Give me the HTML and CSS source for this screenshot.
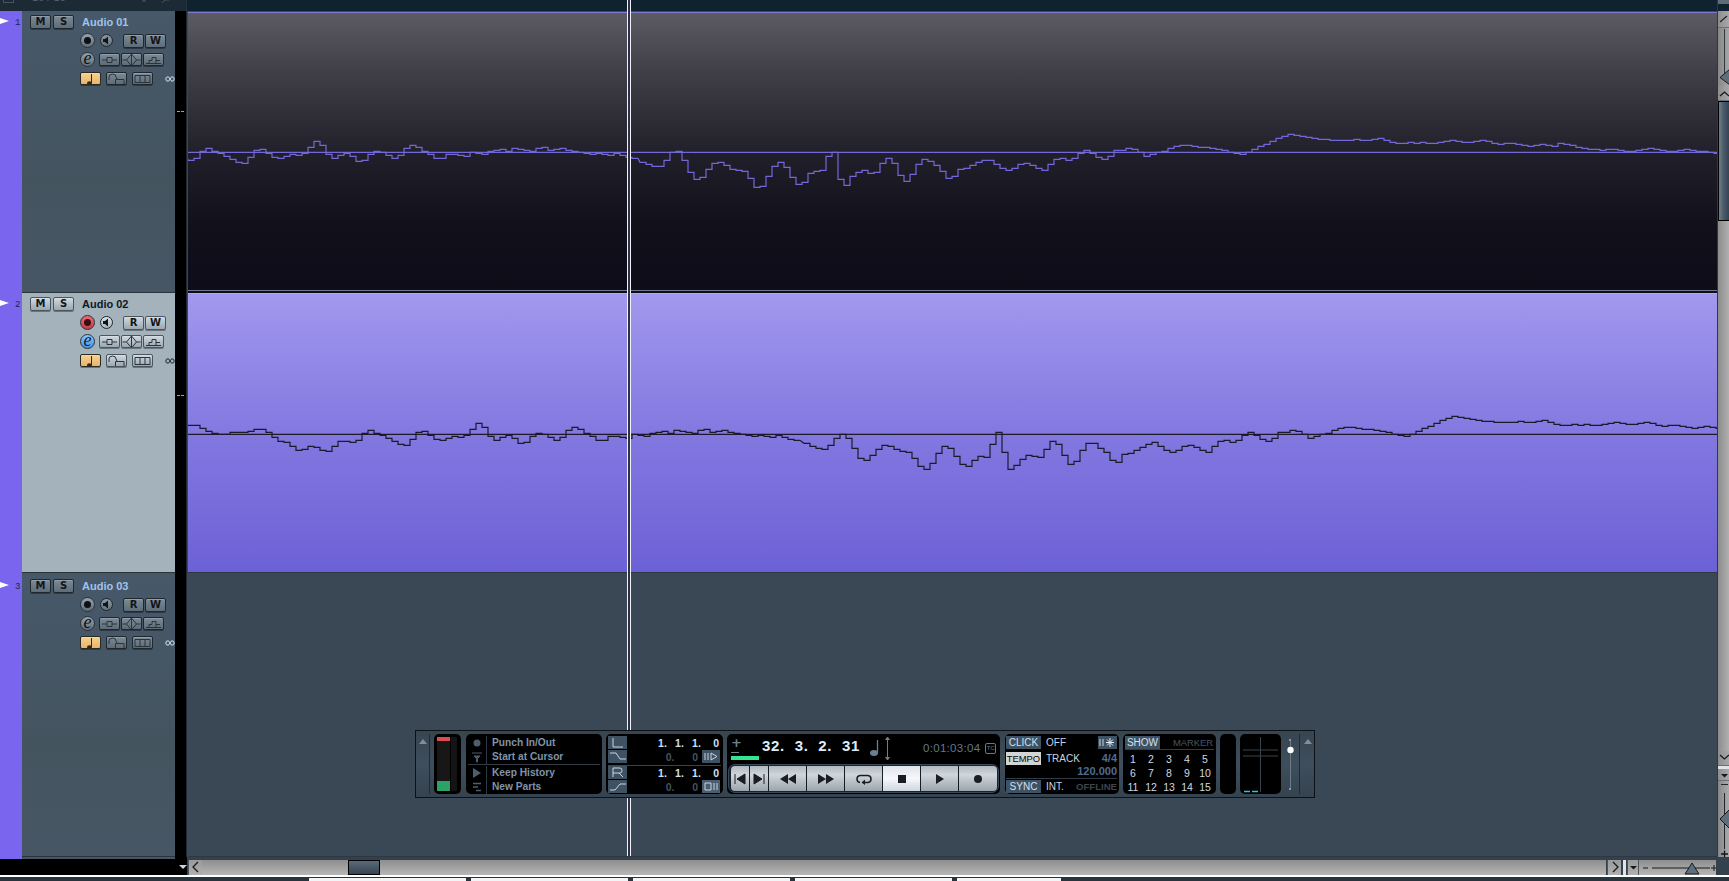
FILE: index.html
```html
<!DOCTYPE html>
<html lang="en">
<head>
<meta charset="utf-8">
<title>Audio tracks</title>
<link rel="stylesheet" href="styles.css">
</head>
<body>
<svg class="defs" aria-hidden="true">
  <symbol id="i-trim" viewBox="0 0 21 14"><path d="M3 7h5M13 7h5M8 4.500h5v5H8z" fill="none" stroke="currentColor"/></symbol>
  <symbol id="i-diamond" viewBox="0 0 21 14"><path d="M10.500 1l5 6-5 6-5-6zM1.500 7h4M15.500 7h4M10.500 1v12" fill="none" stroke="currentColor"/></symbol>
  <symbol id="i-eq" viewBox="0 0 21 14"><path d="M3 10.500h15M6 10.500V7.500h3V4.500h4v6M13 7.500h4" fill="none" stroke="currentColor"/></symbol>
  <symbol id="i-note" viewBox="0 0 21 14"><ellipse cx="9.500" cy="11" rx="2.500" ry="1.800" fill="currentColor"/><path d="M11.500 11V2" stroke="currentColor" fill="none"/></symbol>
  <symbol id="i-lock" viewBox="0 0 21 14"><path d="M3 8V5q0-3 3.500-3T10 5l1 2M9.500 7.500H18v5H9.500z" fill="none" stroke="currentColor"/></symbol>
  <symbol id="i-cells" viewBox="0 0 21 14"><path d="M3 3.500h15v7H3zM8 3.500v7M13 3.500v7" fill="none" stroke="currentColor"/></symbol>
  <symbol id="i-speaker" viewBox="0 0 13 13"><path d="M3 5h2l3-2.500v8L5 8H3z" fill="currentColor"/></symbol>
  <symbol id="i-inf" viewBox="0 0 10 6"><path d="M3 .8a2.200 2.200 0 1 0 0 4.400c2 0 2-4.400 4-4.400a2.200 2.200 0 1 1 0 4.400c-2 0-2-4.400-4-4.400z" fill="none" stroke="currentColor"/></symbol>
</svg>

<div class="app">
  <div class="main">
    <div class="arrange">
      <div class="topbar">
        <div class="topbar-left"><span class="top-box"></span><span class="top-count">16 / 16</span><svg class="top-tools" width="40" height="4"><path d="M3 0v2M1 1h4M21 3l3-3M24 0h4" stroke="#47535d" fill="none"/></svg></div>
        <div class="topbar-right"></div>
      </div>

      <section class="track">
        <div class="strip"><span class="play"></span><span class="num">1</span></div>
        <div class="inspector">
          <div class="row row1"><button class="btn">M</button><button class="btn btn-s">S</button><span class="name">Audio 01</span></div>
          <div class="row row2"><span class="circle rec"><i></i></span><span class="circle mon"><svg width="13" height="13"><use href="#i-speaker"/></svg></span><button class="btn btn-r">R</button><button class="btn btn-w">W</button></div>
          <div class="row row3"><span class="circle edit">e</span><button class="btn ic"><svg width="21" height="14"><use href="#i-trim"/></svg></button><button class="btn ic"><svg width="21" height="14"><use href="#i-diamond"/></svg></button><button class="btn ic"><svg width="21" height="14"><use href="#i-eq"/></svg></button></div>
          <div class="row row4"><button class="btn ic orange"><svg width="21" height="14"><use href="#i-note"/></svg></button><button class="btn ic lock"><svg width="21" height="14"><use href="#i-lock"/></svg></button><button class="btn ic lock"><svg width="21" height="14"><use href="#i-cells"/></svg></button><svg class="inf" width="10" height="6"><use href="#i-inf"/></svg></div>
        </div>
        <div class="vu"><span class="tick"></span></div>
        <div class="lane lane-dark"><svg class="wave" data-track="1"></svg></div>
      </section>

      <section class="track track-sel">
        <div class="strip"><span class="play"></span><span class="num">2</span></div>
        <div class="inspector">
          <div class="row row1"><button class="btn">M</button><button class="btn btn-s">S</button><span class="name">Audio 02</span></div>
          <div class="row row2"><span class="circle rec on"><i></i></span><span class="circle mon"><svg width="13" height="13"><use href="#i-speaker"/></svg></span><button class="btn btn-r">R</button><button class="btn btn-w">W</button></div>
          <div class="row row3"><span class="circle edit on">e</span><button class="btn ic"><svg width="21" height="14"><use href="#i-trim"/></svg></button><button class="btn ic"><svg width="21" height="14"><use href="#i-diamond"/></svg></button><button class="btn ic"><svg width="21" height="14"><use href="#i-eq"/></svg></button></div>
          <div class="row row4"><button class="btn ic orange"><svg width="21" height="14"><use href="#i-note"/></svg></button><button class="btn ic lock"><svg width="21" height="14"><use href="#i-lock"/></svg></button><button class="btn ic lock"><svg width="21" height="14"><use href="#i-cells"/></svg></button><svg class="inf" width="10" height="6"><use href="#i-inf"/></svg></div>
        </div>
        <div class="vu"><span class="tick"></span></div>
        <div class="lane lane-sel"><svg class="wave" data-track="2"></svg></div>
      </section>

      <section class="track track-last">
        <div class="strip"><span class="play"></span><span class="num">3</span></div>
        <div class="inspector">
          <div class="row row1"><button class="btn">M</button><button class="btn btn-s">S</button><span class="name">Audio 03</span></div>
          <div class="row row2"><span class="circle rec"><i></i></span><span class="circle mon"><svg width="13" height="13"><use href="#i-speaker"/></svg></span><button class="btn btn-r">R</button><button class="btn btn-w">W</button></div>
          <div class="row row3"><span class="circle edit">e</span><button class="btn ic"><svg width="21" height="14"><use href="#i-trim"/></svg></button><button class="btn ic"><svg width="21" height="14"><use href="#i-diamond"/></svg></button><button class="btn ic"><svg width="21" height="14"><use href="#i-eq"/></svg></button></div>
          <div class="row row4"><button class="btn ic orange"><svg width="21" height="14"><use href="#i-note"/></svg></button><button class="btn ic lock"><svg width="21" height="14"><use href="#i-lock"/></svg></button><button class="btn ic lock"><svg width="21" height="14"><use href="#i-cells"/></svg></button><svg class="inf" width="10" height="6"><use href="#i-inf"/></svg></div>
        </div>
        <div class="vu"></div>
        <div class="lane lane-empty"></div>
      </section>
    </div>

    <aside class="vscroll">
      <div class="vs-head"></div>
      <div class="vs-gap"></div>
      <div class="vs-btn"><svg width="12" height="15"><path d="M2 11L9 5" stroke="#20282e" stroke-width="1.300" fill="none"/></svg></div>
      <div class="vs-zoom vs-zoom-a"><svg width="12" height="58"><path d="M6.500 1V48" stroke="#30383e"/><path d="M12 41L2 49.500 12 57z" fill="#5e6e7c" stroke="#15191c"/></svg></div>
      <div class="vs-btn vs-arrow"><svg width="12" height="15"><path d="M2 10l4.500-4L11 10" stroke="#15191c" stroke-width="1.300" fill="none"/></svg></div>
      <div class="vs-thumb"></div>
      <div class="vs-track"></div>
      <div class="vs-btn vs-arrow"><svg width="12" height="14"><path d="M2 4l4.500 4L11 4" stroke="#15191c" stroke-width="1.300" fill="none"/></svg></div>
      <div class="vs-white"></div>
      <div class="vs-btn vs-drop"><svg width="12" height="12"><path d="M3 5h7l-3.500 3.500z" fill="#15191c"/></svg></div>
      <div class="vs-zoom vs-zoom-b"><svg width="12" height="76"><path d="M3 3.500h7M6.500 12V68" stroke="#20282e" fill="none"/><path d="M12 28L2 38 12 48z" fill="#5e6e7c" stroke="#15191c"/><path d="M3 73h7M6.500 69.500v7" stroke="#101418" stroke-width="1.300" fill="none"/></svg></div>
    </aside>
  </div>

  <div class="hbar">
    <div class="hb-left"><span class="hb-strip"></span><span class="hb-caret"></span></div>
    <div class="hb-scroll">
      <div class="hb-btn"><svg width="14" height="14"><path d="M9 2L4 7l5 5" stroke="#15191c" stroke-width="1.300" fill="none"/></svg></div>
      <div class="hb-lead"></div>
      <div class="hb-thumb"></div>
      <div class="hb-track"></div>
      <div class="hb-btn"><svg width="14" height="14"><path d="M5 2l5 5-5 5" stroke="#15191c" stroke-width="1.300" fill="none"/></svg></div>
      <div class="hb-white"></div>
      <div class="hb-btn hb-drop"><svg width="11" height="14"><path d="M2 6h7L5.500 9.500z" fill="#15191c"/></svg></div>
      <div class="hb-zoom"><svg width="78" height="15"><path d="M4 8h5M13 8h58M72 8h6M75 5v6" stroke="#15191c" fill="none"/><path d="M46 14l7-11 7 11z" fill="#5e6e7c" stroke="#15191c"/></svg></div>
      <div class="hb-end"></div>
    </div>
  </div>

  <div class="taskbar">
    <span class="task"></span><span class="task"></span><span class="task"></span><span class="task"></span><span class="task task-last"></span>
  </div>

  <div class="cursor"></div>

  <div class="transport">
    <div class="tp-edge"><span class="tri"></span></div>

    <div class="panel tp-meter"><div class="mbar"><span class="m-red"></span><span class="m-green"></span></div><div class="mbar2"></div></div>

    <div class="panel tp-modes">
      <div class="mode-group">
        <div class="mode"><span class="mode-ic"><svg width="14" height="12"><circle cx="7" cy="6" r="3.500" fill="#4e5e6c"/></svg></span><span class="mode-t">Punch In/Out</span></div>
        <div class="mode"><span class="mode-ic"><svg width="14" height="12"><path d="M2 2h10M4 5h6L7.500 7.500V11h-1V7.500z" stroke="#4e5e6c" fill="#4e5e6c"/></svg></span><span class="mode-t">Start at Cursor</span></div>
      </div>
      <div class="mode-group mode-group-b">
        <div class="mode"><span class="mode-ic"><svg width="14" height="12"><path d="M3 1l8 5-8 5z" fill="#4e5e6c"/></svg></span><span class="mode-t">Keep History</span></div>
        <div class="mode"><span class="mode-ic"><svg width="14" height="12"><path d="M3 2.500h8M3 6h5M6 9.500h5" stroke="#4e5e6c" stroke-width="1.500"/></svg></span><span class="mode-t">New Parts</span></div>
      </div>
    </div>

    <div class="panel tp-loc">
      <div class="loc-row"><span class="loc-ic"><svg width="19" height="13"><path d="M5 2v9h10" stroke="#c8d4e0" fill="none"/></svg></span><span class="loc-v">1. &nbsp;1. &nbsp;1. &nbsp; 0</span></div>
      <div class="loc-row"><span class="loc-ic"><svg width="19" height="13"><path d="M2 3h6l4 6h6" stroke="#c8d4e0" fill="none"/></svg></span><span class="loc-v loc-dim">0. &nbsp; 0</span><span class="loc-btn"><svg width="18" height="13"><path d="M3 3v7M6 3v7M9 3l6 3.500L9 10z" stroke="#c8d4e0" fill="none"/></svg></span></div>
      <div class="loc-row loc-sep"><span class="loc-ic"><svg width="19" height="13"><path d="M5 11V2h7q2 0 2 2.500T12 7H5M11 7l4 4" stroke="#c8d4e0" fill="none"/></svg></span><span class="loc-v">1. &nbsp;1. &nbsp;1. &nbsp; 0</span></div>
      <div class="loc-row"><span class="loc-ic"><svg width="19" height="13"><path d="M2 10h5l5-6h6" stroke="#c8d4e0" fill="none"/></svg></span><span class="loc-v loc-dim">0. &nbsp; 0</span><span class="loc-btn loc-btn-b"><svg width="18" height="13"><path d="M3 3h6v7H3zM12 3v7M15 3v7" stroke="#c8d4e0" fill="none"/></svg></span></div>
    </div>

    <div class="panel tp-main">
      <div class="display">
        <div class="nudge"><span class="nudge-p">+</span><span class="nudge-m"></span><span class="lvl"></span></div>
        <span class="pos">32. &nbsp;3. &nbsp;2. &nbsp;31</span>
        <svg class="note" width="30" height="26"><ellipse cx="9" cy="18" rx="4" ry="3" fill="#6c7f90"/><path d="M12.500 18V5" stroke="#6c7f90" stroke-width="1.300"/><path d="M22.500 3v21" stroke="#6c7f90"/><path d="M20.500 5l2-3 2 3M20.500 22l2 3 2-3" stroke="#6c7f90" fill="#6c7f90"/></svg>
        <span class="time">0:01:03:04</span><span class="tc">TC</span>
      </div>
      <div class="deck">
        <div class="tbtn t-s"><svg width="14" height="12"><path d="M2 1v10M12 1L4 6l8 5z" fill="#1a1d21" stroke="#1a1d21"/></svg></div>
        <div class="tbtn t-s"><svg width="14" height="12"><path d="M12 1v10M2 1l8 5-8 5z" fill="#1a1d21" stroke="#1a1d21"/></svg></div>
        <div class="tbtn"><svg width="18" height="12"><path d="M9 1L1 6l8 5zM17 1L9 6l8 5z" fill="#1a1d21"/></svg></div>
        <div class="tbtn"><svg width="18" height="12"><path d="M1 1l8 5-8 5zM9 1l8 5-8 5z" fill="#1a1d21"/></svg></div>
        <div class="tbtn"><svg width="18" height="12"><path d="M5 9.500C1 9 1 3 5 2.500h8c4 .5 4 6.500 0 7H9" fill="none" stroke="#1a1d21" stroke-width="1.500"/><path d="M10 6.500L6.500 9.500 10 12z" fill="#1a1d21"/></svg></div>
        <div class="tbtn t-on"><svg width="10" height="10"><path d="M1 1h8v8H1z" fill="#1a1d21"/></svg></div>
        <div class="tbtn"><svg width="10" height="12"><path d="M1 1l8 5-8 5z" fill="#1a1d21"/></svg></div>
        <div class="tbtn"><svg width="10" height="10"><circle cx="5" cy="5" r="4" fill="#1a1d21"/></svg></div>
      </div>
    </div>

    <div class="panel tp-sync">
      <div class="sy-row"><span class="lab">CLICK</span><span class="sy-t">OFF</span><span class="sy-btn"><svg width="19" height="13"><path d="M2 3v7M5 3v7" stroke="#c8d4e0"/><path d="M12 2v9M8 6.500h8M9 3.500l6 6M15 3.500l-6 6" stroke="#e4ecf4"/></svg></span></div>
      <div class="sy-row sy-tempo"><span class="lab lab-on">TEMPO</span><span class="sy-t">TRACK</span><b class="sy-r sy-blue">4/4</b></div>
      <div class="sy-row sy-bpm"><b class="sy-r sy-blue">120.000</b></div>
      <div class="sy-row sy-last"><span class="lab">SYNC</span><span class="sy-t">INT.</span><b class="sy-r sy-dim">OFFLINE</b></div>
    </div>

    <div class="panel tp-show">
      <div class="sh-head"><span class="lab lab-show">SHOW</span><span class="sh-m">MARKER</span></div>
      <div class="sh-grid">
        <span>1</span><span>2</span><span>3</span><span>4</span><span>5</span>
        <span>6</span><span>7</span><span>8</span><span>9</span><span>10</span>
        <span>11</span><span>12</span><span>13</span><span>14</span><span>15</span>
      </div>
    </div>

    <div class="panel tp-blank"></div>

    <div class="panel tp-out"><svg width="41" height="61"><path d="M20.500 3v55M3 16h17M21 16h17M3 22h17M21 22h17" stroke="#3a444e" fill="none"/><path d="M4 57.500h6M12 57.500h6" stroke="#1fc8f0" stroke-width="1.500"/></svg></div>

    <div class="tp-slider"><svg width="16" height="61"><path d="M7.500 6v49" stroke="#6a7a88"/><path d="M0 6h2v2H0zM0 55h2v2H0z" fill="#8898a6" transform="translate(6 -1)"/><circle cx="7.500" cy="16" r="3.200" fill="#fff"/></svg></div>
    <div class="tp-edge tp-edge-r"><span class="tri"></span></div>
  </div>
</div>
<script src="wave.js"></script>
</body>
</html>
```

FILE: styles.css
```css
* { box-sizing: border-box; }
html, body { margin: 0; height: 100%; overflow: hidden; background: #3a4856; }
body { font-family: "Liberation Sans", Arial, sans-serif; }
.defs { display: none; }
button { font: inherit; padding: 0; margin: 0; }

.app { position: relative; width: 1729px; height: 881px; display: flex; flex-direction: column; overflow: hidden; }
.main { display: flex; height: 857px; }
.arrange { width: 1717px; display: flex; flex-direction: column; }

.topbar { display: flex; height: 11px; overflow: hidden; }
.topbar-left { width: 187px; background: #1b2a35; position: relative; border-right: 1px solid #26323c; }
.topbar-right { flex: 1; background: #0e2230; }
.top-box { display: block; position: absolute; left: 3px; top: -8px; width: 11px; height: 11px; border: 1px solid #47535d; }
.top-count { display: block; position: absolute; left: 32px; top: -9px; font-size: 11px; line-height: 13px; color: #55626e; }
.top-tools { display: block; position: absolute; left: 141px; top: 0; }

.track { display: flex; height: 282px; }
.strip { width: 22px; background: #7a66ee; display: flex; align-items: flex-start; padding-top: 7px; position: relative; }
.play { width: 0; height: 0; border-left: 9px solid #fff; border-top: 3.500px solid transparent; border-bottom: 3.500px solid transparent; margin-top: 0; }
.num { margin-left: 6px; font: 9px/10px "Liberation Mono", monospace; color: #22244a; }

.inspector { width: 153px; background: linear-gradient(#47586a, #44545f 60%, #465664); overflow: hidden; border-bottom: 1px solid #2a343c; color: #9fc4e8; }
.track-sel .inspector { background: #a4b2bc; color: #0f1824; border-bottom: 0; box-shadow: inset 0 -2px 0 #465664, inset 0 -3px 0 #2a343c; }
.vu { width: 11px; background: #000; display: flex; align-items: flex-start; padding: 100px 2px 0; flex: none; margin-right: 2px; box-shadow: 1px 0 0 #1e2a33; }
.tick { width: 7px; height: 1px; background: repeating-linear-gradient(90deg, #2fe0a8 0 3px, transparent 3px 4px); }
.track-sel .tick { margin-top: 2px; }

.lane { flex: 1; min-width: 0; }
.lane-dark { background: linear-gradient(#5c5a62 0, #3f3d46 22%, #211f29 50%, #12101b 75%, #0d0c18 100%); border-top: 1px solid #8278d0; margin-top: 1px; box-shadow: inset 0 -2px 0 #0d0c18, inset 0 -3px 0 #767890; }
.lane-sel { background: linear-gradient(#a298ee 0, #8278e0 50%, #6c60d6 100%); border-top: 1px solid #b2a8f4; box-shadow: inset 0 -2px 0 #3a4856, inset 0 -3px 0 #2c3843; }
.lane-empty { background: #3a4856; border-bottom: 1px solid #2c3843; }
.wave { display: block; width: 100%; height: 100%; overflow: hidden; }

.row { display: flex; align-items: center; }
.row1 { height: 14px; margin: 4px 0 0 8px; }
.row2 { height: 15px; margin: 4px 0 0 58px; }
.row3 { height: 15px; margin: 4px 0 0 58px; }
.row4 { height: 13px; margin: 5px 0 0 58px; }

.btn { width: 21px; height: 14px; border: 1px solid #20282f; border-radius: 2px; background: linear-gradient(#7c8a95, #5e6c77); color: #10161c; font: bold 10px/12px "DejaVu Sans", sans-serif; box-shadow: 0 1px 0 rgba(0,0,0,.35), inset 0 1px 0 rgba(255,255,255,.18); display: flex; align-items: center; justify-content: center; flex: none; }
.track-sel .btn { background: linear-gradient(#d0d9df, #9aa7b1); border-color: #4a555f; }
.btn-s { margin-left: 2px; }
.btn-r { margin-left: 10px; height: 14px; }
.btn-w { margin-left: 1px; }
.ic { color: #2a343c; margin-left: 1px; height: 13px; overflow: hidden; }
.ic svg { display: block; flex: none; margin: -1px; }
.row3 .ic:first-of-type { margin-left: 4px; }
.orange, .track-sel .orange { margin-left: 0; background: linear-gradient(#f6d28f, #e8b46c); border-color: #2a2a25; color: #30281c; }
.lock { margin-left: 5px; }
.name { margin-left: 8px; font: bold 11px/14px "Liberation Sans", Arial, sans-serif; }
.inf { margin-left: 12px; color: #d8e4ee; flex: none; margin-top: 1px; }
.track-sel .inf { color: #1c242c; }

.circle { border-radius: 50%; display: flex; align-items: center; justify-content: center; flex: none; }
.rec { width: 15px; height: 15px; border: 1px solid #2a323a; background: linear-gradient(#96a3ad, #5f6d78); }
.rec i { display: block; width: 7px; height: 7px; border-radius: 50%; background: #0d1014; }
.rec.on { background: linear-gradient(#ee6a72, #c83c48); }
.rec.on i { background: #3a0f14; }
.mon { width: 13px; height: 13px; margin-left: 5px; border: 1px solid #20282f; background: linear-gradient(#8c98a2, #64727c); color: #0f1418; }
.track-sel .mon { background: linear-gradient(#dde4e8, #a6b2ba); }
.mon svg { flex: none; margin: -1px; }
.edit { width: 15px; height: 15px; border: 1px solid #2a323a; background: linear-gradient(#96a3ad, #5f6d78); font: italic 18px/13px "Liberation Serif", serif; color: #0b0f12; padding-bottom: 3px; }
.edit.on { background: linear-gradient(#8cc6fa, #4a92e8); color: #0b1e3a; }

.vscroll { width: 12px; display: flex; flex-direction: column; background: #9c9c9c; border-left: 1px solid #2c3843; }
.vs-head { height: 4px; background: #5f6d78; }
.vs-gap { height: 7px; background: #0e2230; }
.vs-btn { height: 17px; background: linear-gradient(90deg, #8e8e8e, #a8a8a8); border-bottom: 1px solid #66707a; flex: none; }
.vs-btn svg, .vs-zoom svg, .hb-btn svg, .hb-zoom svg { display: block; }
.vs-arrow { height: 15px; }
.vs-zoom-a { height: 58px; flex: none; background: linear-gradient(90deg, #888, #a6a6a6); }
.vs-thumb { height: 120px; flex: none; background: linear-gradient(90deg, #707c86, #47586a 50%, #35444f); border: 1px solid #000; border-right: 0; }
.vs-track { flex: 1; background: linear-gradient(90deg, #8c8c8c, #b0b0b0); }
.vs-white { height: 3px; background: #dfe4ea; flex: none; }
.vs-drop { height: 12px; }
.vs-zoom-b { height: 76px; flex: none; background: linear-gradient(90deg, #888, #aaa); }

.hbar { height: 18px; display: flex; flex: none; background: #34414d; }
.hb-left { width: 187px; background: #000; position: relative; flex: none; }
.hb-strip { display: block; height: 2px; background: linear-gradient(90deg, #7a66ee 22px, #465664 22px, #465664 175px, #000 175px); }
.hb-caret { position: absolute; right: 0; top: 8px; border: 4px solid transparent; border-top: 4px solid #c8d4e4; }
.hb-scroll { flex: 1; display: flex; padding-top: 3px; height: 18px; }
.hb-btn { width: 14px; flex: none; background: linear-gradient(#9a9a9a, #b0b0b0); border-left: 1px solid #4a555e; margin-left: 1px; }
.hb-lead { width: 146px; background: linear-gradient(#8e8e8e, #b6b6b6); flex: none; }
.hb-thumb { width: 32px; flex: none; background: linear-gradient(#5a6a78, #36444f); border: 1px solid #000; }
.hb-track { flex: 1; background: linear-gradient(#8e8e8e, #b6b6b6); }
.hb-white { width: 3px; flex: none; background: #dfe4ea; margin-left: 2px; }
.hb-drop { width: 11px; }
.hb-zoom { width: 78px; flex: none; background: linear-gradient(#8e8e8e, #b6b6b6); border-left: 1px solid #4a555e; }
.hb-end { width: 13px; flex: none; background: #34414d; margin-top: -3px; height: 18px; }

.taskbar { height: 6px; background: linear-gradient(#fff 0 2px, #27343e 2px); display: flex; gap: 5px; padding: 3px 0 0 309px; }
.task { width: 157px; height: 3px; background: #f2f4f6; }
.task-last { width: 104px; }

.cursor { position: absolute; left: 627px; top: 0; width: 4px; height: 856px; background: #2c3048; border-left: 1px solid #f2f2f6; border-right: 1px solid #f2f2f6; }

.transport { position: absolute; left: 415px; top: 730px; width: 900px; height: 68px; display: flex; align-items: stretch; padding: 3px 0; border: 1px solid #0c1218; background: linear-gradient(#37454f, #3e4e5c 50%, #35434f); font-size: 10px; }
.panel { background: #000; border-radius: 5px; flex: none; }
.tp-edge { width: 14px; flex: none; border-right: 1px solid #1e2a34; display: flex; justify-content: center; padding-top: 5px; margin-right: 4px; }
.tp-edge-r { border-right: 0; border-left: 1px solid #1e2a34; margin: 0; width: 16px; justify-content: flex-start; padding-left: 4px; }
.tri { width: 0; height: 0; border: 4px solid transparent; border-bottom: 5px solid #7e8e9c; border-top: 0; }

.tp-meter { width: 27px; padding: 3px; display: flex; gap: 1px; }
.mbar { width: 13px; background: #171717; display: flex; flex-direction: column; justify-content: space-between; }
.m-red { display: block; height: 4px; background: #e04a50; }
.m-green { display: block; height: 10px; background: #2ba268; }
.mbar2 { width: 6px; background: #141414; }

.tp-modes { width: 136px; margin-left: 5px; padding: 0 2px; font-weight: bold; color: #7f94a8; font-size: 10.200px; line-height: 14px; }
.mode-group { padding-top: 2px; height: 30px; }
.mode-group-b { border-top: 1px solid #333c46; height: 31px; padding-top: 1px; }
.mode { display: flex; height: 14px; align-items: center; }
.mode-ic { width: 19px; height: 14px; flex: none; border-right: 1px solid #2e3842; display: flex; justify-content: center; align-items: center; margin-right: 5px; }
.mode-t { white-space: nowrap; }

.tp-loc { width: 117px; margin-left: 4px; padding: 2px; font: bold 10.500px/14px "Liberation Sans", Arial, sans-serif; color: #cfe0f2; }
.loc-row { display: flex; height: 14px; align-items: stretch; }
.loc-sep { border-top: 1px solid #39434d; margin-top: 1px; height: 15px; }
.loc-ic { width: 19px; height: 13px; flex: none; background: #3f5264; align-self: flex-start; }
.loc-ic svg, .loc-btn svg, .sy-btn svg { display: block; }
.loc-v { flex: 1; text-align: right; padding-right: 2px; white-space: nowrap; word-spacing: 1.200px; }
.loc-dim { color: #465260; word-spacing: 3px; }
.loc-btn { width: 18px; height: 13px; flex: none; background: #3f5264; margin-left: 2px; margin-right: 1px; }
.loc-btn-b { background: #4a5e70; }

.tp-main { width: 273px; margin-left: 4px; padding: 0 1px 1px; display: flex; flex-direction: column; }
.display { height: 29px; display: flex; align-items: center; padding-left: 3px; position: relative; }
.nudge { width: 31px; height: 29px; flex: none; display: flex; flex-direction: column; }
.nudge-p { font: bold 13px/13px "DejaVu Sans", sans-serif; color: #6d8092; margin-top: 2px; }
.nudge-m { display: block; width: 8px; height: 1px; background: #6d8092; margin-top: 3px; }
.lvl { display: block; width: 28px; height: 4px; background: #35e690; margin-top: 3px; }
.pos { font: bold 15px/20px "Liberation Sans", Arial, sans-serif; color: #dcecfc; white-space: nowrap; width: 107px; flex: none; padding-left: 0; margin-top: -5px; letter-spacing: .7px; }
.note { flex: none; margin: -2px 0 0 -4px; }
.time { font: 11.500px/14px "Liberation Sans", Arial, sans-serif; color: #62788c; margin-left: 28px; white-space: nowrap; letter-spacing: .3px; margin-top: -1px; }
.tc { width: 11px; height: 11px; border: 1px solid #62788c; border-radius: 2px; font: 6px/9px "Liberation Sans", sans-serif; color: #62788c; text-align: center; margin-left: 5px; margin-top: -1px; flex: none; }
.deck { height: 30px; display: flex; border: 1px solid #3c4a58; border-radius: 7px; padding: 1px 2px; margin-top: 1px; background: #1a222a; }
.tbtn { width: 38px; flex: none; background: linear-gradient(#b0b8c0, #cfd6dc 35%, #9ca5ae); border-right: 1px solid #181d22; display: flex; align-items: center; justify-content: center; }
.tbtn:first-child { border-radius: 4px 0 0 4px; }
.tbtn:last-child { border-radius: 0 4px 4px 0; border-right: 0; }
.t-s { width: 19px; }
.t-on { background: linear-gradient(#dfe5ec, #f6f8fb 50%, #cfd6df); }

.tp-sync { width: 114px; margin-left: 5px; padding: 2px 2px 0 1px; color: #c8d4e0; font-size: 10px; line-height: 13px; }
.sy-row { display: flex; height: 13px; align-items: center; white-space: nowrap; }
.sy-tempo { margin-top: 3px; }
.sy-bpm { justify-content: flex-end; border-bottom: 1px solid #333c46; height: 14px; }
.sy-last { margin-top: 1px; }
.lab { width: 35px; height: 13px; background: #3f5264; color: #d4e0ec; text-align: center; flex: none; font-size: 10px; }
.lab-on { background: #d4d4d4; color: #050505; font-size: 9.400px; }
.sy-t { margin-left: 5px; }
.sy-btn { width: 19px; height: 13px; background: #3f5264; margin-left: auto; }
.sy-r { margin-left: auto; font-weight: bold; font-size: 11px; }
.sy-blue { color: #4f6c90; }
.sy-dim { color: #3c444c; font-size: 9.600px; }

.tp-show { width: 93px; margin-left: 4px; padding: 2px; }
.sh-head { display: flex; height: 14px; border-bottom: 1px solid #333c46; line-height: 13px; color: #d4e0ec; }
.lab-show { height: 13px; }
.sh-m { margin-left: 13px; color: #4a5560; font-size: 9.400px; }
.sh-grid { display: grid; grid-template-columns: repeat(5, 18px); grid-auto-rows: 14px; margin: 2px 0 0 -1px; color: #d0d8e0; font-size: 10.500px; line-height: 14px; text-align: center; }

.tp-blank { width: 16px; margin-left: 4px; }
.tp-out { width: 41px; margin-left: 4px; }
.tp-out svg { display: block; }
.tp-slider { width: 16px; margin-left: 2px; flex: none; }
.tp-slider svg { display: block; }
```

FILE: wave.js
```js
var A = [-9,-9,-6,-3,-1,0,0,-2,-2,-2,-3,-5,-5,-2,3,7,8,12,16,15,12,13,16,17,12,7,7,8,6,-1,-4,-1,1,4,7,10,11,5,-2,-3,1,5,6,4,2,3,1,-5,-11,-7,2,6,3,1,4,9,8,2,-1,0,3,6,3,-4,-7,-5,-1,2,6,6,2,2,3,4,0];
var B = [1,2,-1,-2,-3,-1,-4,-3,-2,-1,-4,-5,-2,-3,-4,-2,-1,0,1,2,1,2,3,1,3,5,6];
var C = [9,12,14,15,11,4,0,4,14,24,26,21,15,11,12,15,17,18,24,32,35,29,19,12,14,22,30,32,26,22,23,10,-2,18,35,31,25,21,22,23,15,7,10,21,30,27,16,9,9,14,18,26,28,20,19,16,13,10,8,12,16,18,16,12,11,13,16,18,12,7,6,8,6,1,-2,1,5,7,4,-2];
var C1 = [10,12,14,14,8,0,-1,8,20,27,25,17,11,10,13,17,18,19,26,35,34,24,14,10,15,25,32,30,21,19,18,4,0,27,33,24,20,18,21,20,11,6,11,23,29,22,12,7,9,13,19,26,24,17,16,13,10,8,8,12];
var D = [-2,-4,-3,0,4,2,0,-1,-4,-6,-7,-7,-6,-5,-5,-4,-3,-2,0,1,2,0,-3,-6,-8,-11,-14,-16,-18,-17,-16,-15,-14,-13,-13,-12,-12,-12,-12,-13,-12,-12,-13,-14,-12,-10,-9,-9,-10,-9,-10,-9,-9,-10,-11,-12,-11,-10,-10,-11,-12,-11,-9,-8,-9,-9,-8,-7,-6,-7,-8,-7,-6];
var TAIL = [-9,-8,-7,-5,-4,-3,-3,-2,-3,-3,-2,-1,-1,-2,-3,-4,-3,-2,-1,-1,-2,-3,-2,-1,-1,0,1];

var LANE_LEFT = 188, STEP = 6;
var NS = "http://www.w3.org/2000/svg";

var TRACKS = {
  "1": {
    base: 139.300,
    stroke: "#7268d8",
    segments: [
      { x: 26, values: A.concat(B) },
      { x: 640, values: C1 },
      { x: 1000, values: C.slice(60).concat(D, TAIL) }
    ]
  },
  "2": {
    base: 140.300,
    stroke: "#1c1a2a",
    segments: [
      { x: 188, values: A.concat(B) },
      { x: 804, values: C.concat(D, TAIL) }
    ]
  }
};

document.querySelectorAll(".wave").forEach(function (svg) {
  var track = TRACKS[svg.getAttribute("data-track")];
  var d = "";
  track.segments.forEach(function (seg) {
    seg.values.forEach(function (v, i) {
      var x = seg.x + STEP * i - LANE_LEFT;
      var y = track.base + v;
      d += (d ? "L" : "M") + x + " " + y + "H" + (x + STEP);
    });
  });
  [d, "M0 " + track.base + "H1529"].forEach(function (shape) {
    var p = document.createElementNS(NS, "path");
    p.setAttribute("d", shape);
    p.setAttribute("fill", "none");
    p.setAttribute("stroke", track.stroke);
    p.setAttribute("stroke-width", "1.200");
    svg.appendChild(p);
  });
});
```
